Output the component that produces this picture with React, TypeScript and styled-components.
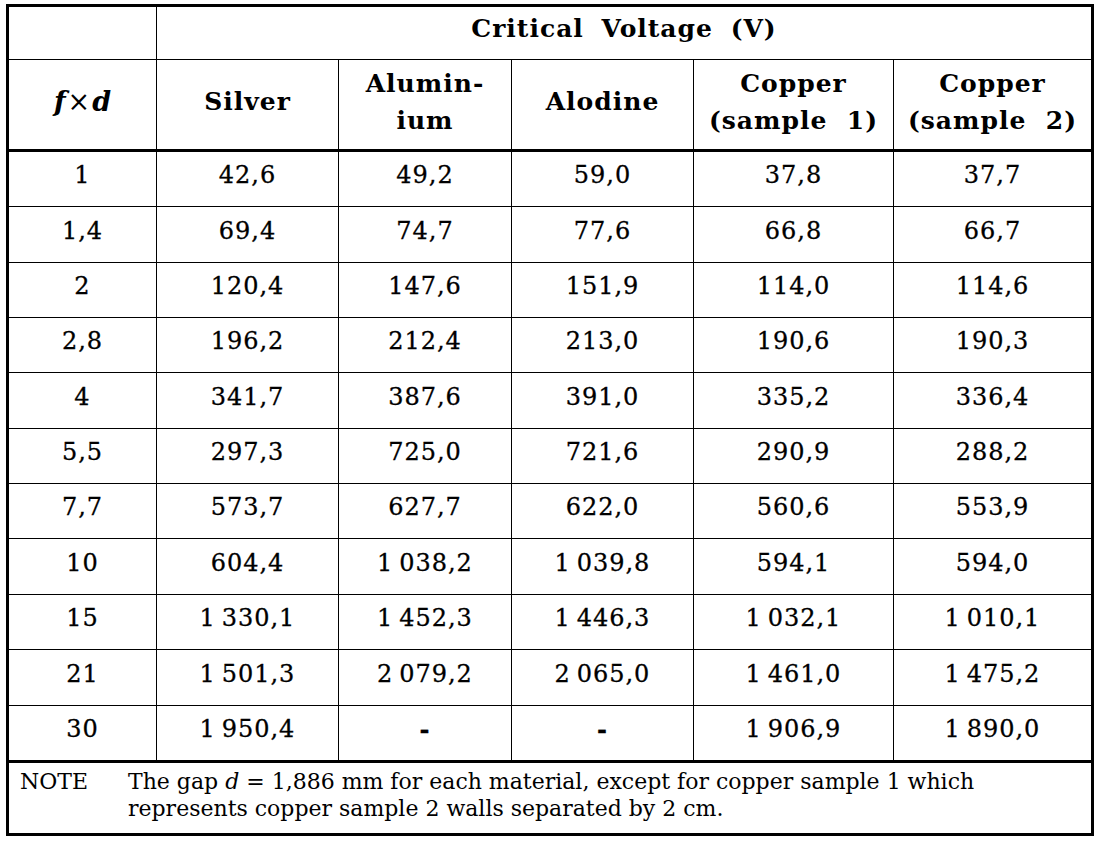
import React from "react";
import styled, { createGlobalStyle } from "styled-components";

const GlobalStyle = createGlobalStyle`
  html, body { margin: 0; padding: 0; background: #fff; }
  body { font-family: "DejaVu Serif", "Liberation Serif", serif; color: #000; }
`;

const Frame = styled.div`
  margin: 4px 0 0 6px;
  width: 1088px;
  height: 832px;
  box-sizing: border-box;
  border: 3px solid #000;
  display: grid;
  grid-template-columns: 148px 182px 173px 182px 200px 197px;
  grid-template-rows: 53px 92px 55px 56px 55px 55px 56px 55px 55px 56px 55px 56px 57px 70px;
`;

const Cell = styled.div<{ $last?: boolean; $thick?: boolean; $span?: number }>`
  box-sizing: border-box;
  display: flex;
  align-items: center;
  justify-content: center;
  text-align: center;
  border-right: ${(p) => (p.$last ? "none" : "1px solid #000")};
  border-bottom: ${(p) => (p.$thick ? "3px" : "1px")} solid #000;
  grid-column: ${(p) => (p.$span ? `span ${p.$span}` : "auto")};
`;

const TitleCell = styled(Cell)`
  font-weight: bold;
  font-size: 25px;
  letter-spacing: 1px;
  word-spacing: 8px;
  padding-bottom: 10px;
`;

const HeadCell = styled(Cell)`
  font-weight: bold;
  font-size: 25px;
  letter-spacing: 1px;
  line-height: 37px;
  padding-bottom: 6px;
`;

const MathExpr = styled.span`
  font-size: 27px;
  letter-spacing: 0;
`;

const MathVar = styled.span`
  font-style: italic;
  font-weight: bold;
`;

const Times = styled.span`
  font-style: normal;
  font-weight: normal;
  margin: 0 2px;
`;

const DataCell = styled(Cell)`
  font-size: 24px;
  letter-spacing: 1px;
  padding-bottom: 8px;
  -webkit-text-stroke: 0.3px #000;
`;

const Dash = styled.span`
  font-weight: bold;
`;

const NoteCell = styled.div`
  grid-column: 1 / -1;
  display: grid;
  grid-template-columns: 108px 1fr;
  padding: 5px 0 0 11px;
  font-size: 22px;
  line-height: 27px;
  white-space: nowrap;
`;

const NoteLabel = styled.div``;
const NoteText = styled.div``;
const NoteLine = styled.div``;
const Ital = styled.span`
  font-style: italic;
`;

const HeadLabel = styled.span`
  white-space: pre;
`;

const columns = [
  "Silver",
  "Alumin-\nium",
  "Alodine",
  "Copper\n(sample\u00a0 1)",
  "Copper\n(sample\u00a0 2)",
];

const rows: string[][] = [
  ["1", "42,6", "49,2", "59,0", "37,8", "37,7"],
  ["1,4", "69,4", "74,7", "77,6", "66,8", "66,7"],
  ["2", "120,4", "147,6", "151,9", "114,0", "114,6"],
  ["2,8", "196,2", "212,4", "213,0", "190,6", "190,3"],
  ["4", "341,7", "387,6", "391,0", "335,2", "336,4"],
  ["5,5", "297,3", "725,0", "721,6", "290,9", "288,2"],
  ["7,7", "573,7", "627,7", "622,0", "560,6", "553,9"],
  ["10", "604,4", "1\u2009038,2", "1\u2009039,8", "594,1", "594,0"],
  ["15", "1\u2009330,1", "1\u2009452,3", "1\u2009446,3", "1\u2009032,1", "1\u2009010,1"],
  ["21", "1\u2009501,3", "2\u2009079,2", "2\u2009065,0", "1\u2009461,0", "1\u2009475,2"],
  ["30", "1\u2009950,4", "-", "-", "1\u2009906,9", "1\u2009890,0"],
];

export default function App() {
  return (
    <>
      <GlobalStyle />
      <Frame>
        <Cell />
        <TitleCell $span={5} $last>
          Critical Voltage (V)
        </TitleCell>
        <HeadCell $thick>
          <MathExpr>
            <MathVar>f</MathVar>
            <Times>×</Times>
            <MathVar>d</MathVar>
          </MathExpr>
        </HeadCell>
        {columns.map((c, i) => (
          <HeadCell key={c} $thick $last={i === columns.length - 1}>
            <HeadLabel>{c}</HeadLabel>
          </HeadCell>
        ))}
        {rows.map((r, ri) =>
          r.map((v, ci) => (
            <DataCell
              key={`${ri}-${ci}`}
              $thick={ri === rows.length - 1}
              $last={ci === r.length - 1}
            >
              {v === "-" ? <Dash>-</Dash> : v}
            </DataCell>
          ))
        )}
        <NoteCell>
          <NoteLabel>NOTE</NoteLabel>
          <NoteText>
            <NoteLine>
              The gap <Ital>d</Ital> = 1,886 mm for each material, except for copper sample 1 which
            </NoteLine>
            <NoteLine>represents copper sample 2 walls separated by 2 cm.</NoteLine>
          </NoteText>
        </NoteCell>
      </Frame>
    </>
  );
}
